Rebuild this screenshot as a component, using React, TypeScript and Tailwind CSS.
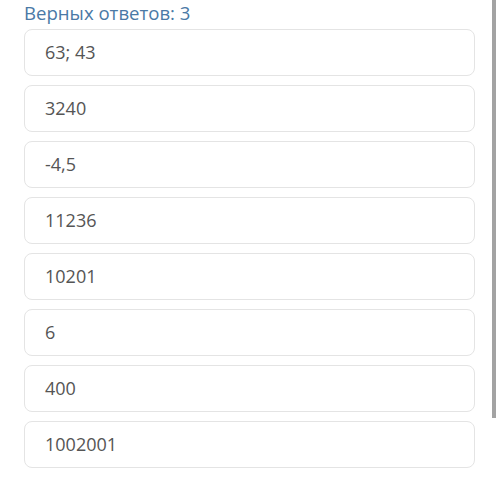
import React from "react";

const answers = ["63; 43", "3240", "-4,5", "11236", "10201", "6", "400", "1002001"];

export default function App() {
  return (
    <div
      className="w-[500px] h-[500px] bg-white flex overflow-hidden"
      style={{ fontFamily: '"Open Sans", "Noto Sans", sans-serif' }}
    >
      <div className="flex-1 pl-[24px] pr-[17px]">
        <div className="text-[18.6px] leading-[24px] text-[#4a79a6] pt-[1px] h-[29px]">
          Верных ответов: 3
        </div>
        <div className="flex flex-col gap-[9px]">
          {answers.map((a, i) => (
            <div
              key={i}
              className="h-[47px] flex items-center pl-[20px] bg-white border border-[#e4e4e4] rounded-[8px] text-[18px] text-[#555555]"
            >
              {a}
            </div>
          ))}
        </div>
      </div>
      <div className="w-[8px] flex flex-col">
        <div className="w-[4px] h-[418px] bg-[#a3a3a3]" />
      </div>
    </div>
  );
}
